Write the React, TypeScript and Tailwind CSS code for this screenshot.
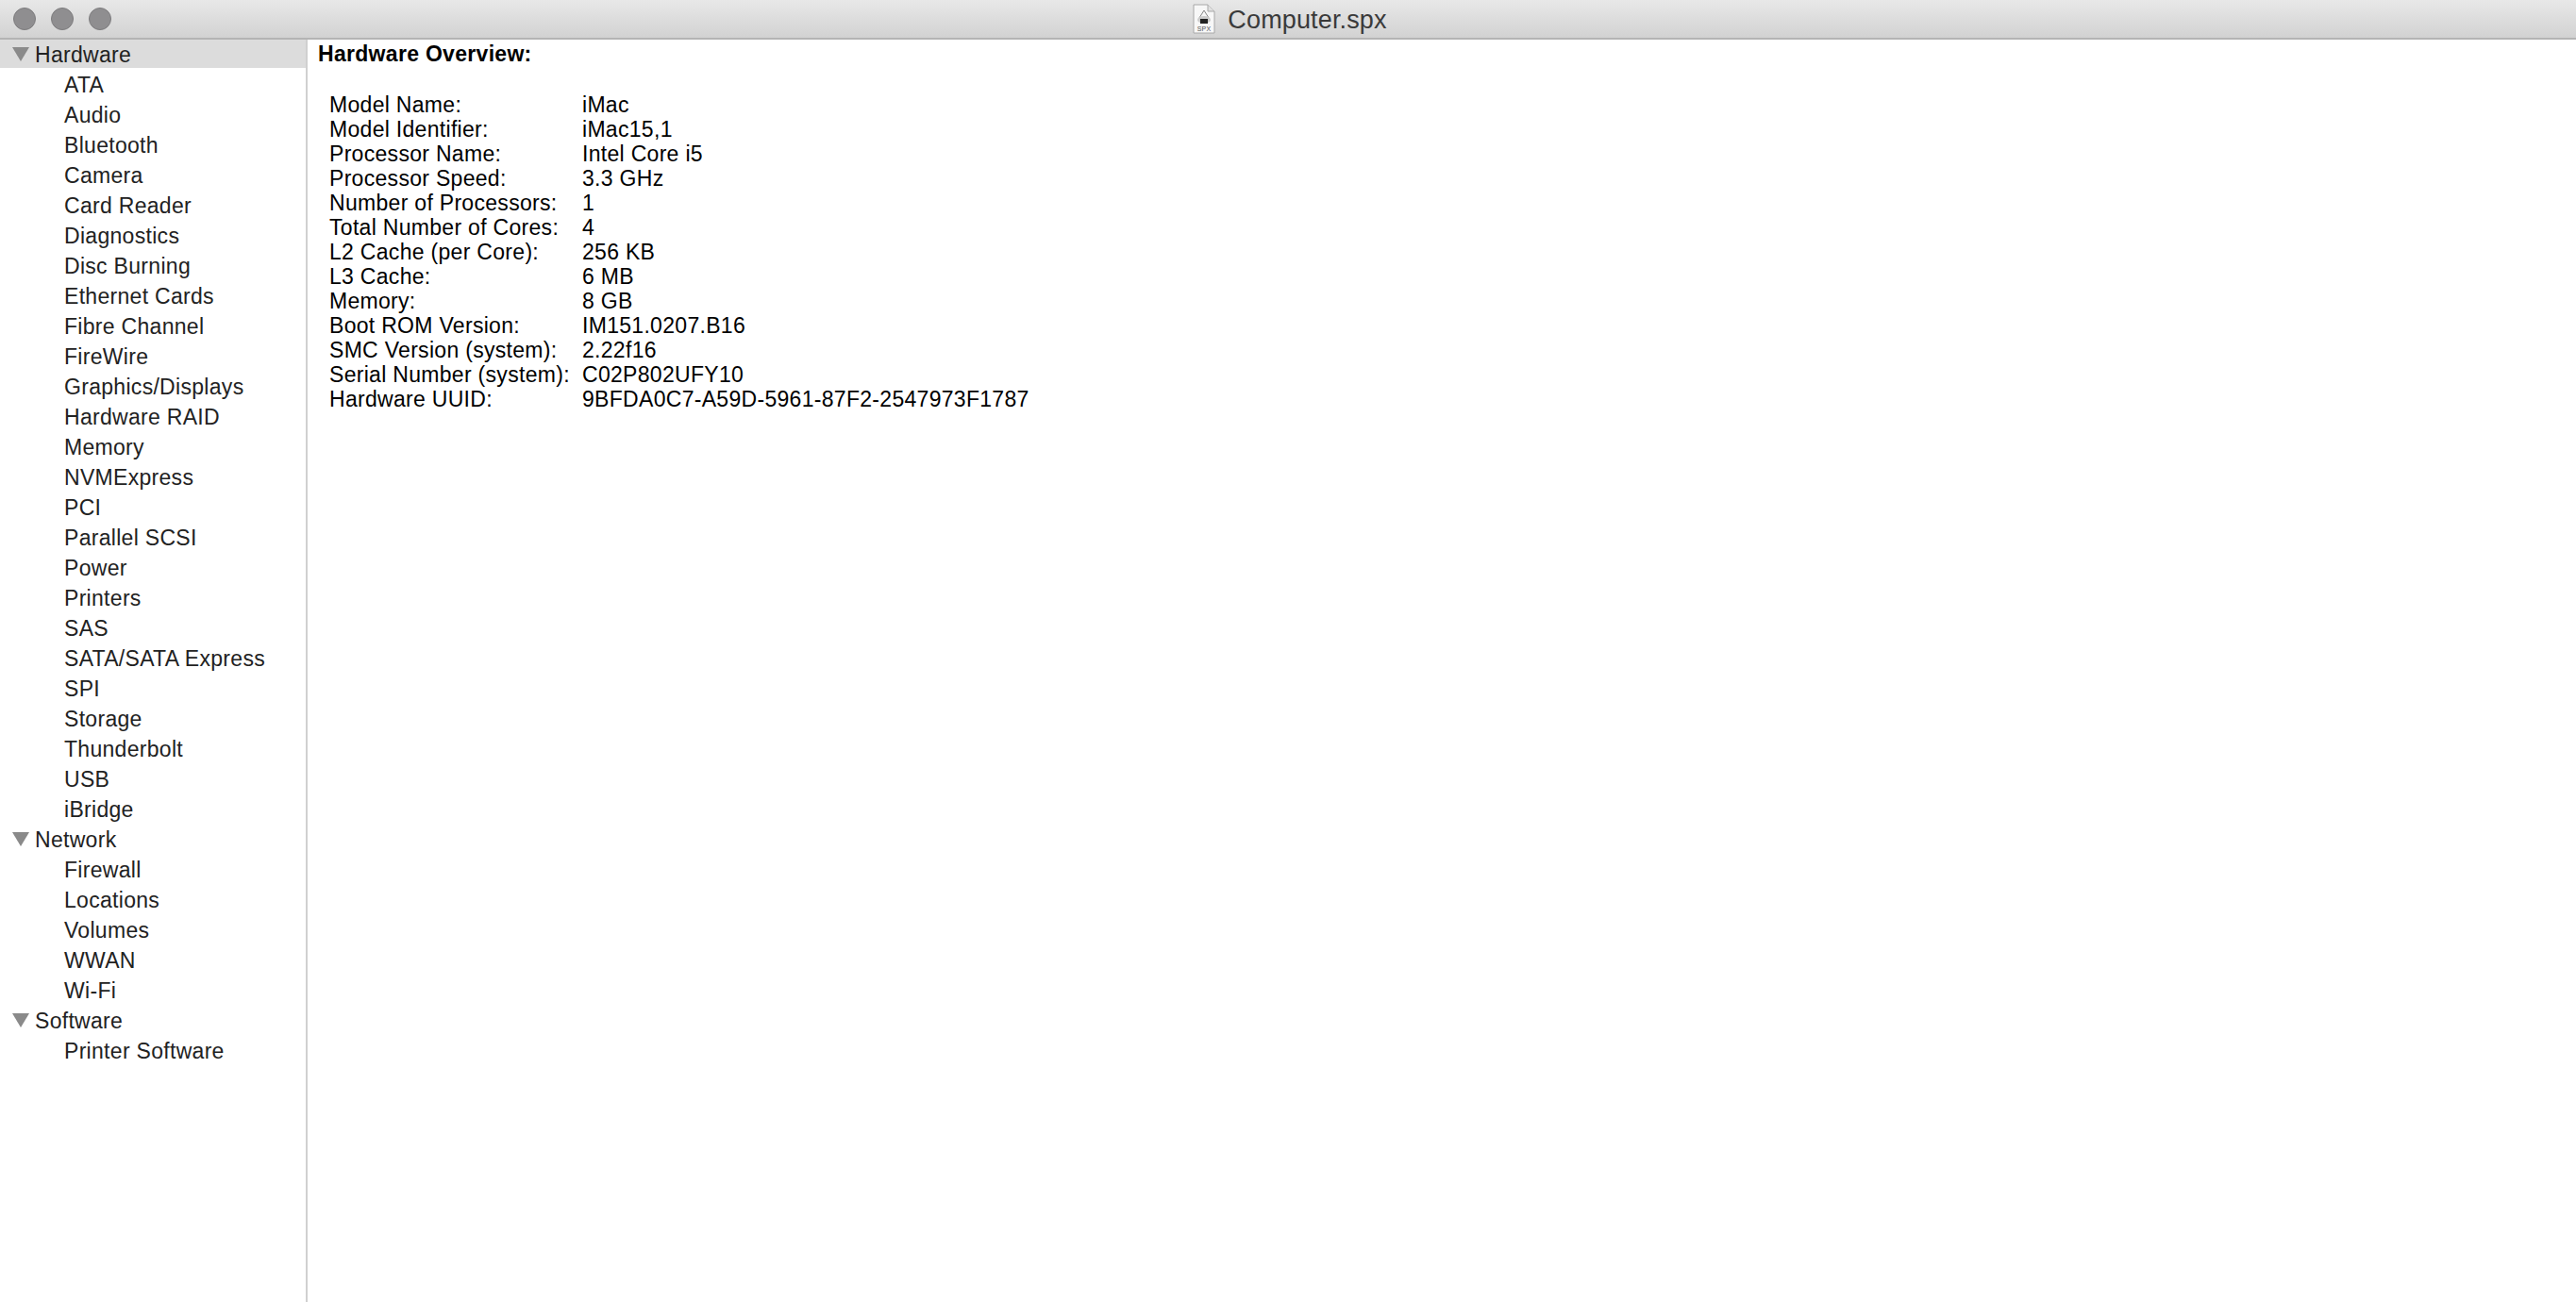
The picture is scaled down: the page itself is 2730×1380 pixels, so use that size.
const hardware = ["ATA","Audio","Bluetooth","Camera","Card Reader","Diagnostics","Disc Burning","Ethernet Cards","Fibre Channel","FireWire","Graphics/Displays","Hardware RAID","Memory","NVMExpress","PCI","Parallel SCSI","Power","Printers","SAS","SATA/SATA Express","SPI","Storage","Thunderbolt","USB","iBridge"];
const network = ["Firewall","Locations","Volumes","WWAN","Wi-Fi"];
const software = ["Printer Software"];
const rows: [string,string][] = [
["Model Name:","iMac"],["Model Identifier:","iMac15,1"],["Processor Name:","Intel Core i5"],["Processor Speed:","3.3 GHz"],["Number of Processors:","1"],["Total Number of Cores:","4"],["L2 Cache (per Core):","256 KB"],["L3 Cache:","6 MB"],["Memory:","8 GB"],["Boot ROM Version:","IM151.0207.B16"],["SMC Version (system):","2.22f16"],["Serial Number (system):","C02P802UFY10"],["Hardware UUID:","9BFDA0C7-A59D-5961-87F2-2547973F1787"]];

function Group({name, items, selected}:{name:string; items:string[]; selected?:boolean}) {
  return (
    <div>
      <div className={`h-[30px] mb-[2px] pt-[2px] flex items-center pl-[13px] ${selected ? "bg-[#dcdcdc]" : ""}`}>
        <svg width="18" height="16" viewBox="0 0 18 16" className="mr-[6px] shrink-0 -translate-y-[1px]"><polygon points="0,1 18,1 9,16" fill="#8a8a8a"/></svg>
        <span>{name}</span>
      </div>
      {items.map(i => <div key={i} className="h-[32px] flex items-center pl-[68px]">{i}</div>)}
    </div>
  );
}

export default function App() {
  return (
    <div className="w-[2730px] h-[1380px] flex flex-col bg-white overflow-hidden text-[#1c1c1c] text-[23px] tracking-[0.3px] font-['Liberation_Sans',Arial,sans-serif]">
      <div className="h-[42px] shrink-0 relative flex items-center justify-center bg-gradient-to-b from-[#e8e8e8] to-[#d2d2d2] border-b-2 border-[#b4b4b4]">
        <div className="absolute left-[14px] top-[8px] flex gap-[16px]">
          <div className="w-[24px] h-[24px] rounded-full bg-[#8f8e90] border border-[#7d7c7e]" />
          <div className="w-[24px] h-[24px] rounded-full bg-[#8f8e90] border border-[#7d7c7e]" />
          <div className="w-[24px] h-[24px] rounded-full bg-[#8f8e90] border border-[#7d7c7e]" />
        </div>
        <div className="flex items-center gap-[13px] text-[27px] tracking-[0.15px] text-[#3a3a3a] translate-x-[2px] translate-y-[1px]">
          <svg width="24" height="32" viewBox="0 0 24 32" className="-translate-y-[1px]">
            <path d="M1 1H16L23 8V31H1Z" fill="#f7f7f7" stroke="#a8a8a8" />
            <path d="M16 1V8H23" fill="#e0e0e0" stroke="#a8a8a8" />
            <path d="M7 15L12 7L17 15" fill="none" stroke="#888" />
            <ellipse cx="12" cy="17" rx="7" ry="4" fill="#ccc" />
            <rect x="8" y="16" width="8" height="5" fill="#222" />
            <text x="12" y="29" textAnchor="middle" fontSize="7" fill="#555">SPX</text>
          </svg>
          <span>Computer.spx</span>
        </div>
      </div>
      <div className="flex-1 flex min-h-0">
        <div className="w-[326px] shrink-0 border-r-2 border-[#d0d0d0] text-[#222]">
          <Group name="Hardware" items={hardware} selected />
          <Group name="Network" items={network} />
          <Group name="Software" items={software} />
        </div>
        <div className="flex-1 pl-[11px] pt-[2px] text-black">
          <div className="font-bold h-[26px] leading-[26px]">Hardware Overview:</div>
          <div className="mt-[28px] ml-[12px] grid grid-cols-[268px_auto] justify-start leading-[26px]">
            {rows.map(([k,v]) => (
              <div key={k} className="contents"><div>{k}</div><div>{v}</div></div>
            ))}
          </div>
        </div>
      </div>
    </div>
  );
}
